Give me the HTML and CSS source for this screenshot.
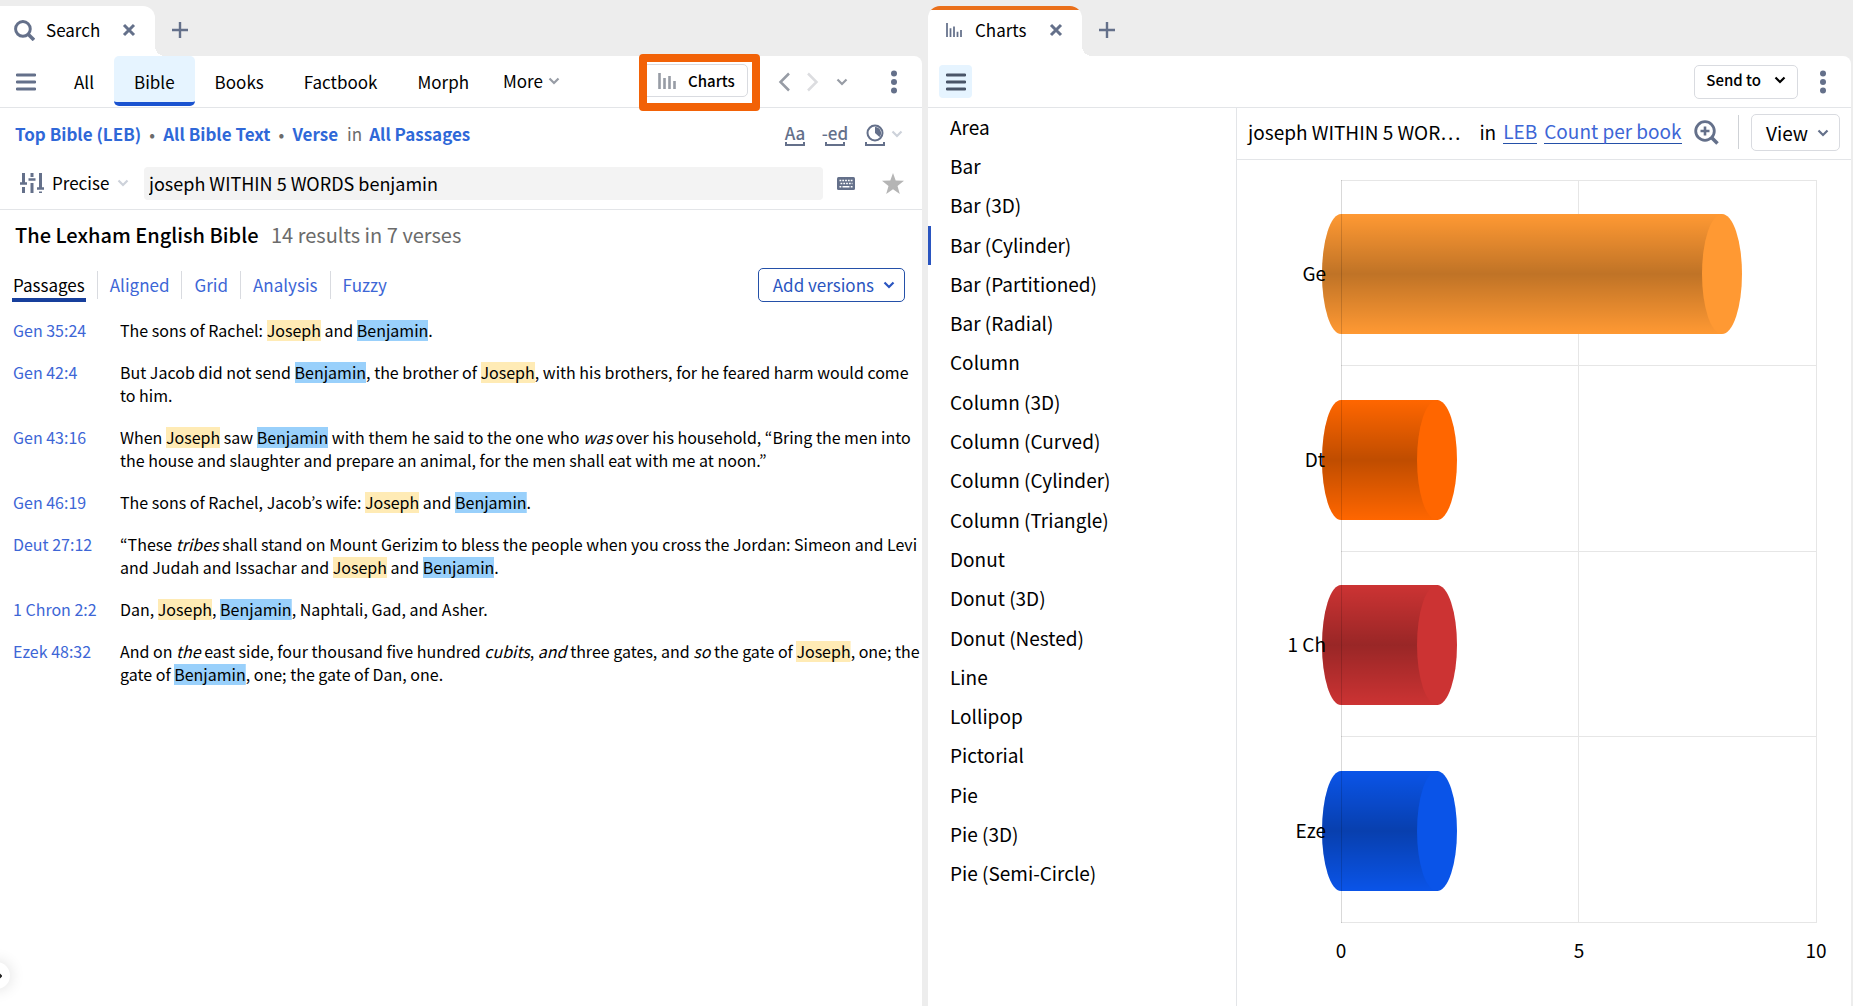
FILE: index.html
```html
<!DOCTYPE html>
<html lang="en">
<head>
<meta charset="utf-8">
<title>Search and Charts</title>
<link rel="stylesheet" href="styles.css">
</head>
<body>
<svg class="defs" aria-hidden="true">
  <symbol id="close" viewBox="0 0 14 14"><path d="M2 2l10 10M12 2L2 12" fill="none" stroke="currentColor" stroke-width="3"/></symbol>
  <symbol id="plus" viewBox="0 0 18 18"><path d="M9 1v16M1 9h16" fill="none" stroke="currentColor" stroke-width="2.4"/></symbol>
  <symbol id="menu" viewBox="0 0 20 18"><path d="M1 2h18M1 9h18M1 16h18" fill="none" stroke="currentColor" stroke-width="2.8" stroke-linecap="round"/></symbol>
  <symbol id="down" viewBox="0 0 12 8"><path d="M1.5 1.5L6 6l4.500-4.500" fill="none" stroke="currentColor" stroke-width="2.200"/></symbol>
  <symbol id="dots" viewBox="0 0 6 24"><circle cx="3" cy="3.500" r="3"/><circle cx="3" cy="12" r="3"/><circle cx="3" cy="20.500" r="3"/></symbol>
  <symbol id="bracket" viewBox="0 0 20 4"><path d="M1 0v3h18V0" fill="none" stroke="currentColor" stroke-width="2"/></symbol>
</svg>
<main class="workspace">
  <section class="pane">
    <header class="tabstrip">
      <div class="tab">
        <svg class="i20" viewBox="0 0 20 20"><circle cx="8.500" cy="8.500" r="7" fill="none" stroke="currentColor" stroke-width="2.800"/><path d="M13.500 13.500l5.500 5.500" stroke="currentColor" stroke-width="3.400"/></svg>
        <span class="tab-name">Search</span>
        <button class="bare" aria-label="Close Search"><svg class="i14"><use href="#close"/></svg></button>
      </div>
      <button class="bare add" aria-label="New tab"><svg class="i18"><use href="#plus"/></svg></button>
    </header>
    <nav class="toolbar">
      <button class="bare menu" aria-label="Menu"><svg class="menu-icon"><use href="#menu"/></svg></button>
      <a class="kind" href="#all">All</a>
      <a class="kind current" href="#bible">Bible</a>
      <a class="kind" href="#books">Books</a>
      <a class="kind" href="#factbook">Factbook</a>
      <a class="kind" href="#morph">Morph</a>
      <button class="bare more">More <svg class="down soft"><use href="#down"/></svg></button>
      <div class="tools">
        <div class="callout">
          <button class="charts-button"><svg class="bars" viewBox="0 0 18 16"><path d="M1.500 0v16M6.500 5v11M11.500 3v13M16.500 8v8" stroke="currentColor" stroke-width="2.600"/></svg>Charts</button>
        </div>
        <button class="bare" aria-label="Back"><svg class="arrow" viewBox="0 0 12 20"><path d="M11 1.500L2.500 10l8.500 8.500" fill="none" stroke="#979ca5" stroke-width="2.500"/></svg></button>
        <button class="bare" aria-label="Forward"><svg class="arrow" viewBox="0 0 12 20"><path d="M1 1.500L9.500 10 1 18.500" fill="none" stroke="#dcdde0" stroke-width="2.500"/></svg></button>
        <button class="bare" aria-label="History"><svg class="down soft"><use href="#down"/></svg></button>
        <button class="bare dots" aria-label="More options"><svg class="dots-icon"><use href="#dots"/></svg></button>
      </div>
    </nav>
    <div class="query">
      <div class="scope">
        <a href="#top">Top Bible (LEB)</a><span class="bullet">•</span><a href="#text">All Bible Text</a><span class="bullet">•</span><a href="#verse">Verse</a><span class="in">in</span><a href="#passages">All Passages</a>
        <div class="match">
          <button class="bare opt" aria-label="Match case"><span>Aa</span><svg class="bracket"><use href="#bracket"/></svg></button>
          <button class="bare opt" aria-label="Match all word forms"><span>-ed</span><svg class="bracket"><use href="#bracket"/></svg></button>
          <button class="bare opt" aria-label="Match equivalents"><svg class="i18" viewBox="0 0 18 18"><circle cx="9" cy="9" r="7.500" fill="none" stroke="currentColor" stroke-width="2"/><path d="M9 3a6 6 0 0 1 4.500 10L9 9z" fill="currentColor"/></svg><svg class="bracket"><use href="#bracket"/></svg></button>
          <svg class="down pale"><use href="#down"/></svg>
        </div>
      </div>
      <form class="search">
        <button type="button" class="bare precise"><svg class="sliders" viewBox="0 0 24 20"><path d="M3.500 0v7M3.500 14v6M12 0v4M12 10v10M20.500 0v14M20.500 18.500v1.500" stroke="currentColor" stroke-width="3"/><path d="M0 10.500h7M8.500 6.500h7M17 15.500h7" stroke="currentColor" stroke-width="2.400"/><path d="M3.500 6v5M20.500 11v5" stroke="currentColor" stroke-width="3"/></svg>Precise <svg class="down pale"><use href="#down"/></svg></button>
        <input class="field" type="text" aria-label="Search query" value="joseph WITHIN 5 WORDS benjamin">
        <button type="button" class="bare keys" aria-label="Keyboard"><svg viewBox="0 0 18 13"><rect width="18" height="13" rx="1.500" fill="#64708a"/><path d="M2.500 3.500h13M3.500 6.500h12" stroke="#fff" stroke-width="1.600" stroke-dasharray="1.800 1"/><path d="M2.500 9.700h1.800M5.500 9.700h7M13.700 9.700h1.800" stroke="#fff" stroke-width="1.600"/></svg></button>
        <button type="button" class="bare star" aria-label="Favorite"><svg viewBox="0 0 22 21"><path d="M11 0l2.700 7.500 8.300.3-6.500 5.100 2.300 8.100-6.800-4.700L4.200 21l2.300-8.100L0 7.800l8.300-.3z" fill="#b5b5b5"/></svg></button>
      </form>
    </div>
    <h1 class="result-title">The Lexham English Bible <span>14 results in 7 verses</span></h1>
    <nav class="views">
      <a class="view on" href="#p">Passages</a>
      <a class="view" href="#a">Aligned</a>
      <a class="view" href="#g">Grid</a>
      <a class="view" href="#n">Analysis</a>
      <a class="view" href="#f">Fuzzy</a>
      <button class="versions">Add versions <svg class="down"><use href="#down"/></svg></button>
    </nav>
    <div class="verses">
      <a href="#v1">Gen 35:24</a><p>The sons of Rachel: <mark>Joseph</mark> and <mark class="b">Benjamin</mark>.</p>
      <a href="#v2">Gen 42:4</a><p>But Jacob did not send <mark class="b">Benjamin</mark>, the brother of <mark>Joseph</mark>, with his brothers, for he feared harm would come to him.</p>
      <a href="#v3">Gen 43:16</a><p>When <mark>Joseph</mark> saw <mark class="b">Benjamin</mark> with them he said to the one who <i>was</i> over his household, “Bring the men into the house and slaughter and prepare an animal, for the men shall eat with me at noon.”</p>
      <a href="#v4">Gen 46:19</a><p>The sons of Rachel, Jacob’s wife: <mark>Joseph</mark> and <mark class="b">Benjamin</mark>.</p>
      <a href="#v5">Deut 27:12</a><p>“These <i>tribes</i> shall stand on Mount Gerizim to bless the people when you cross the Jordan: Simeon and Levi and Judah and Issachar and <mark>Joseph</mark> and <mark class="b">Benjamin</mark>.</p>
      <a href="#v6">1 Chron 2:2</a><p>Dan, <mark>Joseph</mark>, <mark class="b">Benjamin</mark>, Naphtali, Gad, and Asher.</p>
      <a href="#v7">Ezek 48:32</a><p>And on <i>the</i> east side, four thousand five hundred <i>cubits</i>, <i>and</i> three gates, and <i>so</i> the gate of <mark>Joseph</mark>, one; the gate of <mark class="b">Benjamin</mark>, one; the gate of Dan, one.</p>
    </div>
  </section>

  <section class="pane">
    <header class="tabstrip">
      <div class="tab active">
        <svg class="i18 chart-glyph" viewBox="0 0 18 16"><path d="M1 0v16M5 6v10M9 4v12M13 10v6M17 8v8" stroke="currentColor" stroke-width="2"/></svg>
        <span class="tab-name">Charts</span>
        <button class="bare" aria-label="Close Charts"><svg class="i14"><use href="#close"/></svg></button>
      </div>
      <button class="bare add" aria-label="New tab"><svg class="i18"><use href="#plus"/></svg></button>
    </header>
    <div class="toolbar">
      <button class="bare menu pressed" aria-label="Menu"><svg class="menu-icon"><use href="#menu"/></svg></button>
      <div class="tools">
        <button class="send">Send to <svg class="down"><use href="#down"/></svg></button>
        <button class="bare dots" aria-label="More options"><svg class="dots-icon"><use href="#dots"/></svg></button>
      </div>
    </div>
    <div class="chart-body">
      <nav class="types">
        <a href="#t">Area</a><a href="#t">Bar</a><a href="#t">Bar (3D)</a><a class="chosen" href="#t">Bar (Cylinder)</a><a href="#t">Bar (Partitioned)</a><a href="#t">Bar (Radial)</a><a href="#t">Column</a><a href="#t">Column (3D)</a><a href="#t">Column (Curved)</a><a href="#t">Column (Cylinder)</a><a href="#t">Column (Triangle)</a><a href="#t">Donut</a><a href="#t">Donut (3D)</a><a href="#t">Donut (Nested)</a><a href="#t">Line</a><a href="#t">Lollipop</a><a href="#t">Pictorial</a><a href="#t">Pie</a><a href="#t">Pie (3D)</a><a href="#t">Pie (Semi-Circle)</a>
      </nav>
      <div class="chart">
        <div class="chart-head">
          <span class="name">joseph WITHIN 5 WOR…</span>
          <span>in</span>
          <a href="#leb">LEB</a>
          <a href="#count">Count per book</a>
          <button class="bare zoom" aria-label="Zoom in"><svg viewBox="0 0 25 25"><circle cx="11" cy="11" r="9.300" fill="none" stroke="currentColor" stroke-width="2.800"/><path d="M11 6.500v9M6.500 11h9" stroke="currentColor" stroke-width="2.600"/><path d="M17.500 17.500l6 6" stroke="currentColor" stroke-width="3.600"/></svg></button>
          <button class="view-button">View <svg class="down"><use href="#down"/></svg></button>
        </div>
        <svg class="plot" viewBox="0 0 614 846" role="img" aria-label="Count per book">
          <defs>
            <linearGradient id="shade" x1="0" y1="0" x2="0" y2="1"><stop offset="0" stop-color="#000" stop-opacity="0"/><stop offset=".5" stop-color="#000" stop-opacity=".25"/><stop offset="1" stop-color="#000" stop-opacity="0"/></linearGradient>
          </defs>
          <path d="M104 20.500h475M104 205.500h475M104 391.500h475M104 576.500h475M104 762.500h475" stroke="#e6e6e6"/>
          <path d="M341.500 20v743M579.500 20v743" stroke="#e6e6e6"/>
          <g fill="#ff9933"><path d="M104 54h381v120H104a19 60 0 0 1 0-120z"/><path d="M104 54h381v120H104a19 60 0 0 1 0-120z" fill="url(#shade)"/><ellipse cx="485" cy="114" rx="20" ry="60"/></g>
          <g fill="#ff6600"><path d="M104 240h97v120h-97a19 60 0 0 1 0-120z"/><path d="M104 240h97v120h-97a19 60 0 0 1 0-120z" fill="url(#shade)"/><ellipse cx="200" cy="300" rx="20" ry="60"/></g>
          <g fill="#cc3333"><path d="M104 425h97v120h-97a19 60 0 0 1 0-120z"/><path d="M104 425h97v120h-97a19 60 0 0 1 0-120z" fill="url(#shade)"/><ellipse cx="200" cy="485" rx="20" ry="60"/></g>
          <g fill="#0a54e8"><path d="M104 611h97v120h-97a19 60 0 0 1 0-120z"/><path d="M104 611h97v120h-97a19 60 0 0 1 0-120z" fill="url(#shade)"/><ellipse cx="200" cy="671" rx="20" ry="60"/></g>
          <path d="M104.500 20v743" stroke="#000" stroke-opacity=".15"/>
          <g text-anchor="end"><text x="89" y="121">Ge</text><text x="88" y="307">Dt</text><text x="89" y="492">1 Ch</text><text x="89" y="678">Eze</text></g>
          <g text-anchor="middle"><text x="104" y="798">0</text><text x="342" y="798">5</text><text x="579" y="798">10</text></g>
        </svg>
      </div>
    </div>
  </section>
</main>
<button class="drawer" aria-label="Open sidebar"><svg viewBox="0 0 6 10"><path d="M2 2l3 3-3 3" fill="none" stroke="#222" stroke-width="2"/></svg></button>
</body>
</html>
```
FILE: styles.css
```css
* { box-sizing: border-box; }
body {
  margin: 0;
  padding-right: 2px;
  background: #ededed;
  color: #000;
  font-family: "Noto Sans CJK KR", "Open Sans", sans-serif;
  font-size: 17px;
  line-height: 24px;
  overflow-x: hidden;
}
.defs { position: absolute; width: 0; height: 0; }
a { color: inherit; text-decoration: none; }
button { font: inherit; color: inherit; cursor: pointer; }
svg { display: block; flex: none; }
.bare { display: flex; align-items: center; padding: 0; border: 0; background: none; color: #64708a; }
.i14 { width: 14px; height: 14px; }
.i18 { width: 18px; height: 18px; }
.i20 { width: 21px; height: 21px; }
.down { width: 12px; height: 8px; }
.soft { color: #979ca5; }
.pale { color: #cdd2da; }

.workspace { display: grid; grid-template-columns: minmax(0, 922fr) minmax(0, 923fr); gap: 6px; min-height: 100vh; }
.pane { display: flex; flex-direction: column; min-width: 0; }
.pane > :not(.tabstrip) { background: #fff; }

.tabstrip { display: flex; height: 56px; padding-top: 6px; }
.tab {
  position: relative;
  display: flex;
  align-items: center;
  padding: 0 19px 2px 14px;
  border-radius: 0 12px 0 0;
  background: #fff;
  color: #64708a;
}
.tab::after {
  content: "";
  position: absolute;
  left: 100%;
  bottom: 0;
  width: 10px;
  height: 10px;
  background: radial-gradient(circle at 100% 0, transparent 10px, #fff 10px);
}
.tab.active { padding-left: 17px; border-radius: 12px 12px 0 0; background: linear-gradient(#ea6f1a 4px, #fff 4px); }
.chart-glyph { height: 14px; }
.tab-name { margin: 0 22px 0 11px; color: #000; }
.add { margin-left: 16px; padding-bottom: 2px; }
.active .tab-name { margin-left: 12px; }

.toolbar { display: flex; align-items: stretch; height: 52px; border-bottom: 1px solid #e3e5e8; border-top-right-radius: 8px; }
.menu { align-self: center; justify-content: center; width: 33px; height: 33px; margin: 0 12px 0 9px; border-radius: 4px; }
.menu-icon { width: 20px; height: 18px; }
.pressed { margin-left: 11px; background: #e6f4ff; color: #4a5568; }
.kind { display: flex; align-items: center; padding: 1px 20px 0; }
.current { border-bottom: 4px solid #1a53d0; border-radius: 5px; background: #e6f4ff; padding-top: 5px; margin-bottom: 1px; }
.more { gap: 5px; padding: 0 0 2px 14px; color: #000; }
.tools { display: flex; align-items: center; margin-left: auto; padding-right: 25px; gap: 17px; }
.callout { position: relative; margin-right: 13px; padding-bottom: 2px; }
.callout::after {
  content: "";
  position: absolute;
  inset: -10px -12px -12px -1px;
  border: 8px solid #f26207;
  border-radius: 4px;
  pointer-events: none;
}
.charts-button, .send, .view-button { display: flex; align-items: center; border: 1px solid #d9dbe0; border-radius: 5px; background: #fff; }
.charts-button { height: 33px; width: 108px; gap: 12px; padding: 0 12px 0 17px; font-size: 15px; font-weight: 500; }
.bars { width: 18px; height: 16px; color: #979ca5; }
.arrow { width: 12px; height: 20px; }
.dots { margin-left: 26px; }
.dots-icon { width: 6px; height: 24px; fill: #64708a; }

.query { border-bottom: 1px solid #e3e5e8; }
.scope { display: flex; align-items: center; height: 52px; padding: 0 19px 0 15px; }
.scope > a { color: #2f68d8; font-weight: 700; }
.bullet { width: 22px; text-align: center; color: #6b6b6b; }
.in { margin: 0 7px 0 9px; color: #6b6b6b; }
.match { display: flex; align-items: center; gap: 20px; margin-left: auto; }
.opt { flex-direction: column; justify-content: flex-end; width: 20px; height: 24px; line-height: 18px; font-weight: 500; white-space: nowrap; }
.bracket { width: 20px; height: 4px; }
.match .down { margin-left: -14px; }
.search { display: flex; align-items: center; height: 49px; margin: 0; padding: 0 18px 2px 20px; }
.precise { gap: 8px; width: 124px; padding-bottom: 2px; color: #000; }
.sliders { width: 24px; height: 20px; color: #64708a; }
.field { flex: 1; min-width: 0; height: 33px; padding: 0 5px 2px; border: 0; border-radius: 4px; background: #f3f3f3; color: #000; font: inherit; font-size: 18px; }
.keys { margin: 0 27px 0 14px; }
.keys svg { width: 18px; height: 13px; }
.star svg { width: 22px; height: 21px; }

.result-title { margin: 0; padding: 10px 15px; font-size: 20px; font-weight: 500; line-height: 30px; }
.result-title span { margin-left: 8px; color: #6b6b6b; font-weight: 400; }
.views { display: flex; align-items: center; padding: 8px 17px 8px 1px; }
.view { padding: 0 12px; border-left: 1px solid #d9dbe0; color: #3d66d6; line-height: 28px; }
.view:first-child { border: 0; }
.on { color: #000; background: linear-gradient(#173f9c, #173f9c) center bottom / calc(100% - 22px) 4px no-repeat; }
.view.on { padding-bottom: 3px; margin-bottom: -3px; }
.versions { display: flex; align-items: center; gap: 9px; height: 34px; margin-left: auto; padding: 0 9px 0 14px; border: 1px solid #2450a8; border-radius: 5px; background: #fff; color: #2a55c0; }
.verses { display: grid; grid-template-columns: 107px 1fr; align-content: start; row-gap: 19px; flex: 1; padding: 9px 2px 24px 13px; font-size: 16px; line-height: 23px; }
.verses a { color: #3d66d6; }
.verses p { margin: 0; }
mark { background: linear-gradient(#ffebb5, #ffebb5) center / 100% 21px no-repeat; color: inherit; }
mark.b { background-image: linear-gradient(#99d0fb, #99d0fb); }

.send { height: 34px; gap: 13px; margin-right: 1px; padding: 0 11px 3px 11px; font-size: 15px; font-weight: 500; }
.send + .dots { margin-left: 4px; }
.chart-body { display: flex; flex: 1; }
.types { display: grid; grid-auto-rows: 1fr; flex: 0 1 309px; padding-bottom: 112px; border-right: 1px solid #e3e5e8; font-size: 19px; }
.types a { display: flex; align-items: center; padding: 0 0 2px 22px; }
.types .chosen { border-left: 3px solid #2a55c0; padding-left: 19px; }
.chart { flex: 1; min-width: 0; }
.chart-head { display: flex; align-items: center; height: 52px; padding: 0 11px 2px; border-bottom: 1px solid #e3e5e8; font-size: 19px; white-space: nowrap; }
.chart-head .name { margin-right: 19px; }
.chart-head > span, .chart-head > a { margin-top: -2px; }
.chart-head a { margin-left: 7px; border-bottom: 1px solid #2450a8; color: #3d66d6; }
.zoom { margin-left: 12px; }
.zoom svg { width: 25px; height: 25px; }
.view-button { position: relative; height: 37px; gap: 9px; margin-left: auto; padding: 0 10px 0 14px; }
.view-button::before { content: ""; position: absolute; left: -14px; top: 0; height: 34px; border-left: 1px solid #cfd2d6; }
.view-button .down { color: #64708a; }
.plot { width: 100%; height: auto; font-size: 19px; fill: #000; }

.drawer { position: fixed; left: -17px; bottom: 17px; display: flex; align-items: center; justify-content: flex-end; width: 27px; height: 27px; padding: 0 8px; border: 0; border-radius: 50%; background: #fff; box-shadow: 0 0 16px rgba(0, 0, 0, .14); }
.drawer svg { width: 6px; height: 10px; }
```
